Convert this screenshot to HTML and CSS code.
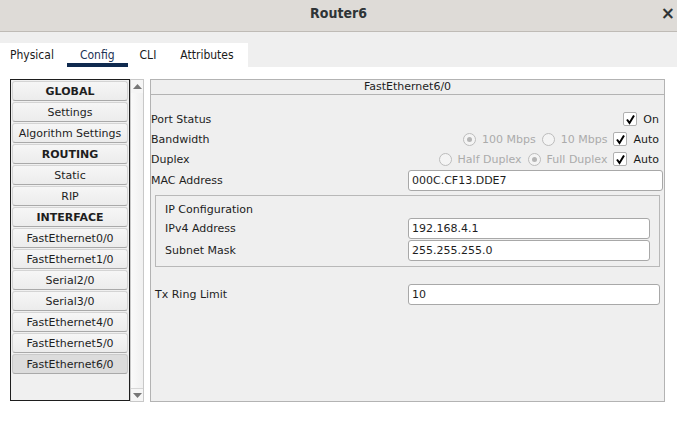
FILE: index.html
```html
<!DOCTYPE html>
<html>
<head>
<meta charset="utf-8">
<link rel="stylesheet" href="styles.css">
</head>
<body>
<div class="window">
  <header class="titlebar">
    <span class="title">Router6</span>
    <span class="close">×</span>
  </header>
  <div class="tabbar">
    <nav class="tabs">
      <span class="tab first">Physical</span>
      <span class="tab active">Config</span>
      <span class="tab">CLI</span>
      <span class="tab">Attributes</span>
    </nav>
  </div>
  <main class="content">
    <div class="sidebar">
      <div class="list">
        <div class="item head">GLOBAL</div>
        <div class="item">Settings</div>
        <div class="item">Algorithm Settings</div>
        <div class="item head">ROUTING</div>
        <div class="item">Static</div>
        <div class="item">RIP</div>
        <div class="item head">INTERFACE</div>
        <div class="item">FastEthernet0/0</div>
        <div class="item">FastEthernet1/0</div>
        <div class="item">Serial2/0</div>
        <div class="item">Serial3/0</div>
        <div class="item">FastEthernet4/0</div>
        <div class="item">FastEthernet5/0</div>
        <div class="item selected">FastEthernet6/0</div>
      </div>
      <div class="scrollbar">
        <div class="sb-btn up"><svg width="9" height="5" viewBox="0 0 9 5"><path d="M0 5 L4.5 0 L9 5 Z" fill="#777"/></svg></div>
        <div class="sb-track"></div>
        <div class="sb-btn down"><svg width="9" height="5" viewBox="0 0 9 5"><path d="M0 0 L4.5 5 L9 0 Z" fill="#777"/></svg></div>
      </div>
    </div>
    <section class="panel">
      <div class="panel-head">FastEthernet6/0</div>
      <div class="panel-body">
        <div class="row">
          <span class="label">Port Status</span>
          <div class="ctrl">
            <span class="check"><svg width="11" height="11" viewBox="0 0 11 11"><path d="M2 5.5 L4.5 9 L9 1.5" fill="none" stroke="#000" stroke-width="2"/></svg></span>
            <span class="opt">On</span>
          </div>
        </div>
        <div class="row">
          <span class="label">Bandwidth</span>
          <div class="ctrl">
            <span class="radio on"></span><span class="opt dis">100 Mbps</span>
            <span class="radio"></span><span class="opt dis">10 Mbps</span>
            <span class="check"><svg width="11" height="11" viewBox="0 0 11 11"><path d="M2 5.5 L4.5 9 L9 1.5" fill="none" stroke="#000" stroke-width="2"/></svg></span>
            <span class="opt">Auto</span>
          </div>
        </div>
        <div class="row">
          <span class="label">Duplex</span>
          <div class="ctrl">
            <span class="radio"></span><span class="opt dis">Half Duplex</span>
            <span class="radio on"></span><span class="opt dis">Full Duplex</span>
            <span class="check"><svg width="11" height="11" viewBox="0 0 11 11"><path d="M2 5.5 L4.5 9 L9 1.5" fill="none" stroke="#000" stroke-width="2"/></svg></span>
            <span class="opt">Auto</span>
          </div>
        </div>
        <div class="row field mac">
          <span class="label">MAC Address</span>
          <div class="input">000C.CF13.DDE7</div>
        </div>
        <fieldset class="ipbox">
          <div class="iptitle">IP Configuration</div>
          <div class="row field">
            <span class="label">IPv4 Address</span>
            <div class="input">192.168.4.1</div>
          </div>
          <div class="row field">
            <span class="label">Subnet Mask</span>
            <div class="input">255.255.255.0</div>
          </div>
        </fieldset>
        <div class="row field tx">
          <span class="label">Tx Ring Limit</span>
          <div class="input">10</div>
        </div>
      </div>
    </section>
  </main>
</div>
</body>
</html>
```

FILE: styles.css
```css
* { box-sizing: border-box; }
html, body { margin: 0; padding: 0; }
body {
  width: 677px;
  height: 423px;
  overflow: hidden;
  background: #ffffff;
  font-family: "DejaVu Sans", sans-serif;
  font-size: 11px;
  color: #1a1a1a;
}
.window { width: 677px; height: 423px; display: flex; flex-direction: column; }

.titlebar {
  height: 32px;
  flex: none;
  background: #dedbd7;
  border-bottom: 1px solid #bfbbb6;
  display: flex;
  align-items: center;
  justify-content: center;
  position: relative;
}
.title {
  font-family: "DejaVu Sans Condensed", "DejaVu Sans", sans-serif;
  font-stretch: condensed;
  font-weight: bold;
  font-size: 14px;
  color: #2e3436;
  margin-top: -5px;
}
.close {
  position: absolute;
  right: 2px;
  top: 3px;
  font-size: 17px;
  font-weight: bold;
  color: #2e3436;
}

.tabbar {
  flex: none;
  background: #efefef;
  padding-top: 11px;
  height: 35px;
}
.tabs {
  display: flex;
  width: 248px;
  height: 24px;
  background: #ffffff;
  font-family: "DejaVu Sans Condensed", "DejaVu Sans", sans-serif;
  font-stretch: condensed;
  font-size: 12px;
  color: #1a1a1a;
}
.tab {
  padding: 0 12px 0 12px;
  line-height: 24px;
  position: relative;
}
.tab.first { padding-left: 10px; padding-right: 13px; }
.tab.active { padding-left: 13px; padding-right: 13px; color: #1c3356; }
.tab.active::after {
  content: "";
  position: absolute;
  left: 0; right: 0;
  bottom: 0;
  height: 4px;
  background: #0f2a4f;
}

.content {
  flex: 1;
  display: flex;
  padding: 12px 0 0 10px;
  gap: 6px;
}
.sidebar { display: flex; height: 323px; }
.list {
  width: 120px;
  height: 322px;
  border: 1px solid #1e1e1e;
  background: #f0f0f0;
  padding: 1px 1px;
  display: flex;
  flex-direction: column;
  gap: 1px;
}
.item {
  height: 20px;
  line-height: 19px;
  text-align: center;
  background: linear-gradient(#f6f6f6, #ececec);
  border: 1px solid #d4d4d4;
  border-bottom-color: #a9a9a9;
  border-radius: 3px;
  white-space: nowrap;
  font-size: 11px;
  color: #1e1e1e;
}
.item.head { font-weight: bold; }
.item.selected { background: #dcdcdc; border-color: #cacaca #cacaca #a9a9a9; }

.scrollbar {
  width: 14px;
  height: 323px;
  border: 1px solid #c8c8c8;
  background: #f6f6f6;
  display: flex;
  flex-direction: column;
}
.sb-btn { height: 13px; display: flex; align-items: center; justify-content: center; }
.sb-btn.down { border-top: 1px solid #d6d6d6; height: 13px; }
.sb-track { flex: 1; background: linear-gradient(90deg, #fafafa, #f0f0f0); }

.panel {
  width: 515px;
  height: 323px;
  border: 1px solid #b3b3b3;
  background: #efefef;
  display: flex;
  flex-direction: column;
}
.panel-head {
  height: 15px;
  line-height: 14px;
  text-align: center;
  border-bottom: 1px solid #b3b3b3;
  color: #1e1e1e;
}
.panel-body { padding: 14px 0 0 0; display: flex; flex-direction: column; }

.row {
  display: grid;
  grid-template-columns: 257px 1fr;
  align-items: center;
  height: 20px;
}
.label { white-space: nowrap; color: #1e1e1e; }
.ctrl {
  display: flex;
  align-items: center;
  justify-content: flex-end;
  padding-right: 5px;
}
.opt { margin-left: 6px; white-space: nowrap; }
.opt.dis { color: #ababab; margin-right: 6px; }
.check {
  width: 14px; height: 14px;
  background: #ffffff;
  border: 1px solid #b0b0b0;
  border-radius: 2px;
  display: flex; align-items: center; justify-content: center;
}
.radio {
  width: 13px; height: 13px;
  border: 1px solid #bcbcbc;
  border-radius: 50%;
  background: #f4f4f4;
  position: relative;
}
.radio.on::after {
  content: "";
  position: absolute;
  left: 3px; top: 3px;
  width: 5px; height: 5px;
  border-radius: 50%;
  background: #b5b5b5;
}

.row.field { height: 21px; }
.row.mac { margin-top: 1px; }
.input {
  height: 21px;
  background: #ffffff;
  border: 1px solid #a8a8a8;
  border-radius: 3px;
  padding: 0 3px;
  line-height: 19px;
  color: #1e1e1e;
  margin-right: 1px;
}

.ipbox {
  margin: 4px 4px 0 4px;
  padding: 3px 9px 6px 9px;
  border: 1px solid #b8b8b8;
  height: 72px;
}
.iptitle { height: 20px; line-height: 22px; margin-bottom: -2px; }
.ipbox .row { grid-template-columns: 243px 1fr; height: 22px; }
.ipbox .input { margin-right: 0; }
.row.tx { margin: 17px 4px 0 4px; grid-template-columns: 253px 1fr; }
.row.tx .input { margin-right: 0; }
```
